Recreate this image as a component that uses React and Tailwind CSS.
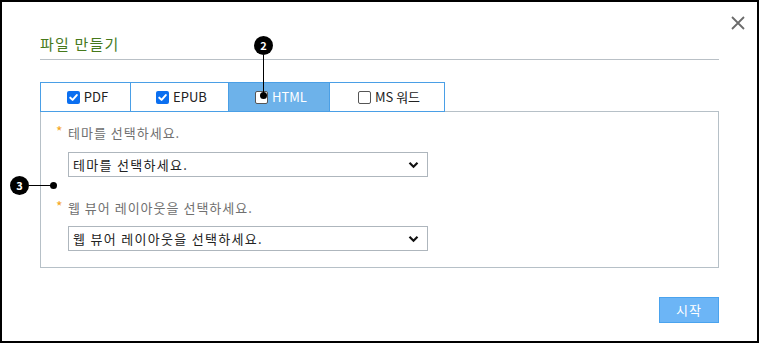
import React from 'react';

const font = { fontFamily: '"Noto Sans CJK KR", "Noto Sans", sans-serif' };

const tabs = [
  { name: 'PDF', w: 'w-[89px]', checked: true },
  { name: 'EPUB', w: 'w-[98px]', checked: true },
  { name: 'HTML', w: 'w-[101px]', active: true },
  { name: 'MS 워드', w: 'w-[115px]' },
];

function Check({ checked }) {
  if (checked) {
    return (
      <span className="w-[13px] h-[13px] rounded-[2px] bg-[#0b6ff0] flex items-center justify-center">
        <svg width="11" height="11" viewBox="0 0 12 12">
          <path d="M2.5 6.2 L5 8.6 L9.6 3.4" fill="none" stroke="white" strokeWidth="2.2" strokeLinecap="round" strokeLinejoin="round" />
        </svg>
      </span>
    );
  }
  return <span className="w-[13px] h-[13px] rounded-[2px] border border-[#555] bg-white" />;
}

function Marker({ n }) {
  return (
    <span className="w-[19px] h-[19px] rounded-full bg-black text-white text-[11px] font-bold flex items-center justify-center leading-none">
      {n}
    </span>
  );
}

function Select({ text }) {
  return (
    <div className="w-[360px] h-[25px] border border-[#aeb6bd] flex items-center justify-between pl-[4px] pr-[8px] text-[13px] tracking-[1.3px] text-[#222]">
      <span>{text}</span>
      <svg width="11" height="8" viewBox="0 0 11 8">
        <path d="M1.5 1.8 L5.5 5.8 L9.5 1.8" fill="none" stroke="#111" strokeWidth="2.2" />
      </svg>
    </div>
  );
}

function Label({ text }) {
  return (
    <div className="flex text-[13px] leading-[18px] text-[#707070] tracking-[1px] -ml-[12px]">
      <span className="text-[#f5a623] w-[12px] text-[14px] leading-[14px]">*</span>
      <span>{text}</span>
    </div>
  );
}

export default function App() {
  return (
    <div className="w-[760px] h-[344px] bg-white" style={font}>
      <div className="relative w-[759px] h-[343px] border-2 border-black px-[38px] flex flex-col">
        {/* Close */}
        <button className="absolute right-[11px] top-[13px]">
          <svg width="16" height="16" viewBox="0 0 16 16">
            <path d="M2 2 L14 14 M14 2 L2 14" stroke="#6b6b6b" strokeWidth="1.8" />
          </svg>
        </button>

        {/* Title */}
        <div className="pt-[32px] pb-[5px] border-b border-[#b9c0c6] text-[15px] tracking-[1.2px] text-[#46791b] leading-[20px]">
          파일 만들기
        </div>

        {/* Tabs */}
        <div className="mt-[22px] flex relative z-10">
          <div className="flex border border-[#4a9fe6]">
            {tabs.map((t, i) => (
              <div
                key={t.name}
                className={
                  t.w +
                  ' h-[28px] flex items-center justify-center gap-[4px] pl-[4px] text-[13px] ' +
                  (i > 0 ? 'border-l border-[#4a9fe6] ' : '') +
                  (t.active ? 'bg-[#6db2ea] text-white' : 'bg-white text-[#222]')
                }
              >
                <Check checked={t.checked} />
                <span>{t.name}</span>
              </div>
            ))}
          </div>
        </div>

        {/* Panel */}
        <div className="-mt-px h-[157px] border border-[#b6c0c7] pl-[27px] pt-[12px] flex flex-col">
          <Label text="테마를 선택하세요." />
          <div className="mt-[10px]">
            <Select text="테마를 선택하세요." />
          </div>
          <div className="mt-[22px]">
            <Label text="웹 뷰어 레이아웃을 선택하세요." />
          </div>
          <div className="mt-[9px]">
            <Select text="웹 뷰어 레이아웃을 선택하세요." />
          </div>
        </div>

        {/* Footer */}
        <div className="flex justify-end mt-[29px]">
          <button className="w-[60px] h-[26px] bg-[#6cb5f6] border border-[#4aa3ee] text-white text-[13px] tracking-[1px]">
            시작
          </button>
        </div>

        {/* Annotation 2 */}
        <div className="absolute left-[252px] top-[34px] flex flex-col items-center z-20">
          <Marker n="2" />
          <span className="w-px h-[40px] bg-black" />
          <span className="w-[7px] h-[7px] rounded-full bg-black -mt-[3px]" />
        </div>

        {/* Annotation 3 */}
        <div className="absolute left-[8px] top-[174px] flex items-center z-20">
          <Marker n="3" />
          <span className="w-[24px] h-px bg-black" />
          <span className="w-[7px] h-[7px] rounded-full bg-black -ml-[3px]" />
        </div>
      </div>
    </div>
  );
}
